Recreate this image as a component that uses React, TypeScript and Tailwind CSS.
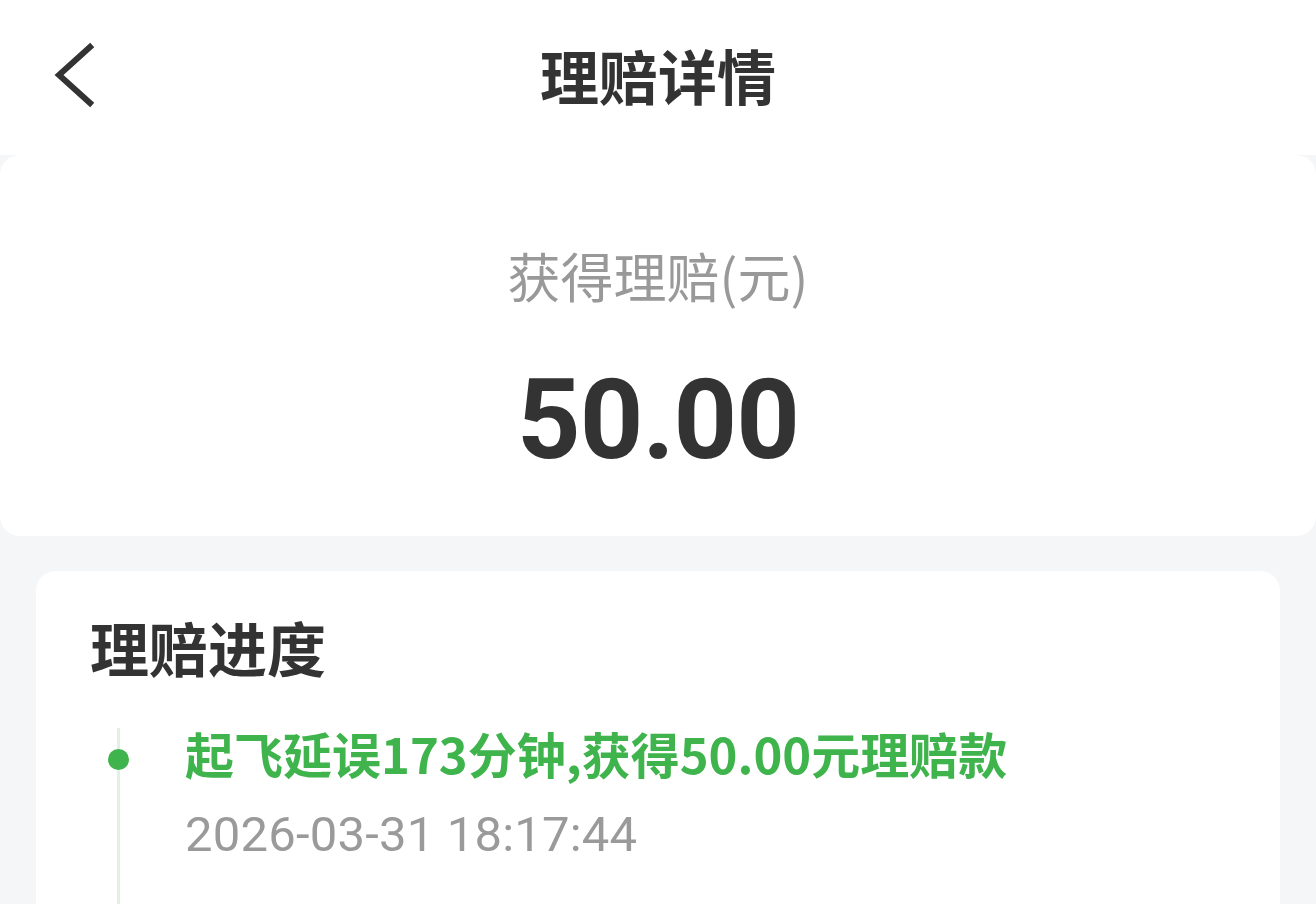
const CJK = { fontFamily: '"Noto Sans CJK SC", "Noto Sans", sans-serif' }
const NUM = { fontFamily: 'Roboto, "Noto Sans", sans-serif' }

export default function App() {
  return (
    <div className="min-h-[904px] w-full bg-[#f5f6f8] overflow-hidden" style={CJK}>
      {/* header */}
      <div className="relative flex h-[155px] items-center justify-center bg-white">
        <button className="absolute left-[44px] top-[36px] text-[#333]">
          <svg width="60" height="80" viewBox="0 0 60 80" fill="none">
            <path d="M46 11 L15 39 L46 67" stroke="currentColor" strokeWidth="6" strokeLinecap="square" />
          </svg>
        </button>
        <h1 className="mt-[-6px] text-[59px] font-bold leading-none text-[#333]">理赔详情</h1>
      </div>

      {/* amount */}
      <div className="flex h-[381px] flex-col items-center rounded-[20px] bg-white">
        <div className="mt-[94px] text-[53px] leading-none text-[#999]">获得理赔(元)</div>
        <div className="mt-[63px] text-[111px] font-bold leading-none tracking-[-1px] text-[#333]" style={NUM}>
          50.00
        </div>
      </div>

      {/* progress */}
      <div className="mx-[36px] mt-[35px] h-[400px] rounded-[20px] bg-white px-[54px] pt-[46px]">
        <h2 className="text-[59px] font-bold leading-none text-[#333]">理赔进度</h2>
        <div className="relative mt-[52px] flex">
          <div className="relative w-[95px] shrink-0">
            <div className="absolute left-[27px] top-0 h-[300px] w-[3px] bg-[#dff2e3]" />
            <div className="absolute left-[18px] top-[21px] h-[21px] w-[21px] rounded-full bg-[#3fb44d]" />
          </div>
          <div className="flex flex-col">
            <div className="text-[49px] font-bold leading-none text-[#3fb44d]">起飞延误173分钟,获得50.00元理赔款</div>
            <div className="mt-[33px] text-[49px] leading-none tracking-[0.2px] text-[#9a9a9a]" style={NUM}>
              2026-03-31 18:17:44
            </div>
          </div>
        </div>
      </div>
    </div>
  )
}
